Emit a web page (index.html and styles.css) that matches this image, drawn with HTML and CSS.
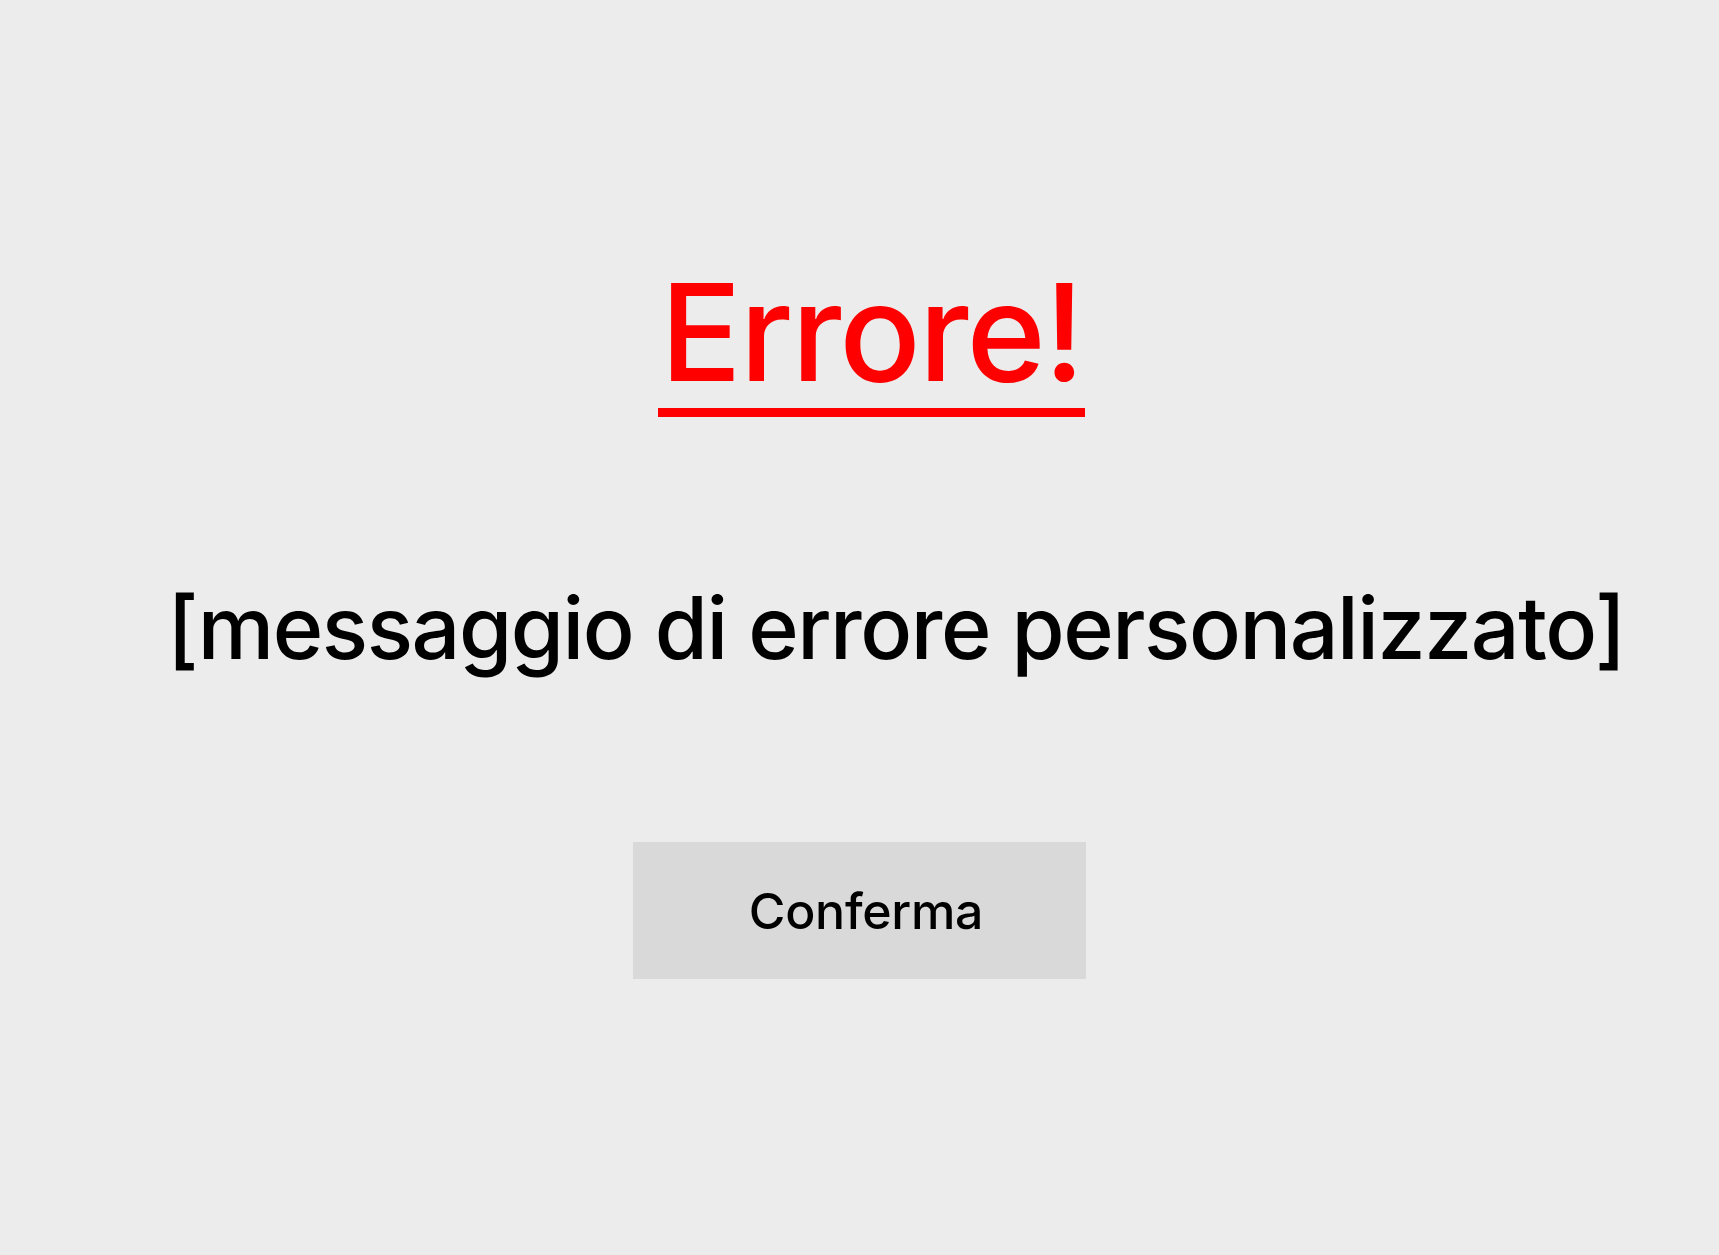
FILE: index.html
```html
<!DOCTYPE html>
<html lang="it">
<head>
<meta charset="utf-8">
<title>Errore</title>
<link rel="stylesheet" href="styles.css">
</head>
<body>
<main class="dialog">
  <h1 class="title">Errore!</h1>
  <p class="message">[messaggio di errore personalizzato]</p>
  <button class="confirm" type="button">Conferma</button>
</main>
</body>
</html>
```

FILE: styles.css
```css
html, body {
  margin: 0;
  padding: 0;
}
body {
  background: #ececec;
  font-family: Inter, "Noto Sans", sans-serif;
  color: #000;
  width: 1719px;
  height: 1255px;
  overflow: hidden;
}
.dialog {
  display: flex;
  flex-direction: column;
  align-items: flex-start;
  padding-top: 265px;
}
.title {
  margin: 0 0 0 658px;
  width: 427px;
  text-align: center;
  font-size: 135px;
  line-height: 135px;
  font-weight: 450;
  letter-spacing: -2px;
  color: #ff0000;
  padding-bottom: 8px;
  border-bottom: 9px solid #ff0000;
}
.message {
  margin: 168px 0 0 167px;
  font-size: 86px;
  line-height: 86px;
  font-weight: 450;
  letter-spacing: -1.45px;
  white-space: nowrap;
}
.confirm {
  margin: 171px 0 0 633px;
  width: 453px;
  height: 137px;
  border: none;
  background: #d9d9d9;
  font-family: inherit;
  font-size: 50px;
  font-weight: 450;
  letter-spacing: -0.3px;
  color: #000;
  padding: 0 0 0 13px;
}
```
